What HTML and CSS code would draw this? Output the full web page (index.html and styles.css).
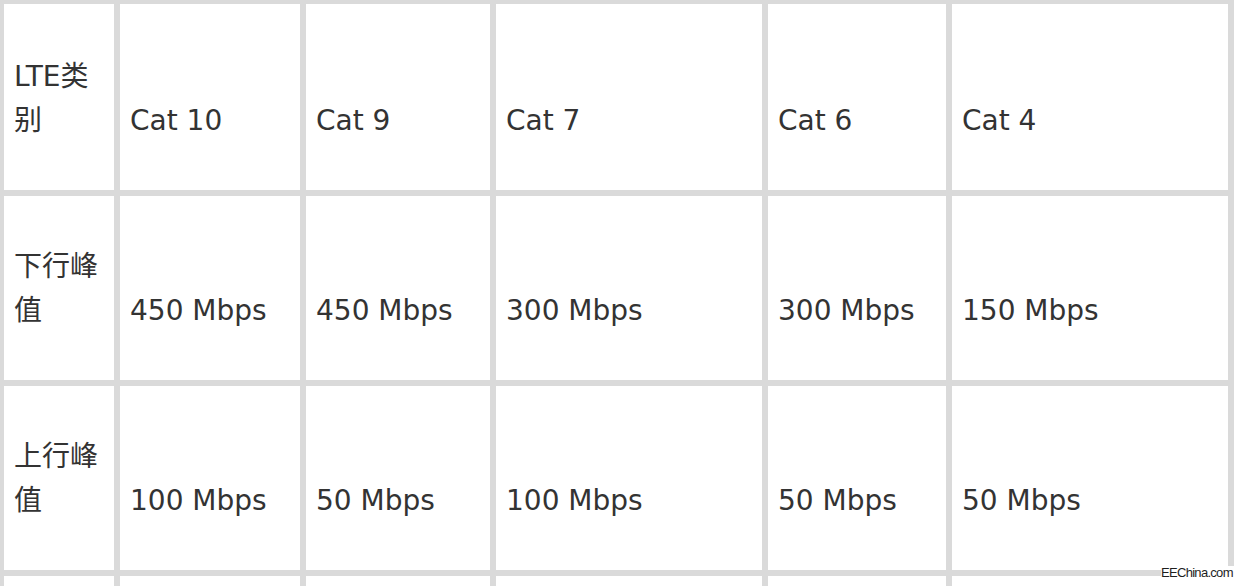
FILE: index.html
```html
<!DOCTYPE html>
<html lang="zh-CN">
<head>
<meta charset="utf-8">
<title>LTE类别</title>
<link rel="stylesheet" href="styles.css">
</head>
<body>
<div class="sheet">
  <div class="grid">
    <div class="cell">LTE类别</div>
    <div class="cell">Cat 10</div>
    <div class="cell">Cat 9</div>
    <div class="cell">Cat 7</div>
    <div class="cell">Cat 6</div>
    <div class="cell">Cat 4</div>

    <div class="cell">下行峰值</div>
    <div class="cell">450 Mbps</div>
    <div class="cell">450 Mbps</div>
    <div class="cell">300 Mbps</div>
    <div class="cell">300 Mbps</div>
    <div class="cell">150 Mbps</div>

    <div class="cell">上行峰值</div>
    <div class="cell">100 Mbps</div>
    <div class="cell">50 Mbps</div>
    <div class="cell">100 Mbps</div>
    <div class="cell">50 Mbps</div>
    <div class="cell">50 Mbps</div>

    <div class="cell"></div>
    <div class="cell"></div>
    <div class="cell"></div>
    <div class="cell"></div>
    <div class="cell"></div>
    <div class="cell"></div>
  </div>
  <div class="watermark">EEChina.com</div>
</div>
</body>
</html>
```

FILE: styles.css
```css
html, body {
  margin: 0;
  padding: 0;
  background: #ffffff;
}

body {
  width: 1240px;
  height: 586px;
  overflow: hidden;
}

.sheet {
  position: relative;
  width: 1240px;
  height: 586px;
  overflow: hidden;
}

.grid {
  display: grid;
  width: 1224px;
  grid-template-columns: 110px 180px 184px 266px 178px 276px;
  grid-template-rows: 186px 184px 184px 100px;
  gap: 6px;
  padding: 4px 6px 0 4px;
  background: #dadada;
}

.cell {
  background: #ffffff;
  display: flex;
  align-items: flex-end;
  padding: 0 9px 47px 10px;
  font-family: Verdana, "DejaVu Sans", "Noto Sans CJK SC", sans-serif;
  font-size: 28px;
  line-height: 44px;
  color: #333333;
  min-width: 0;
}

.watermark {
  position: absolute;
  left: 1161px;
  right: 0;
  top: 566px;
  bottom: 0;
  background: #ffffff;
  font-family: "Liberation Sans", Arial, sans-serif;
  font-size: 13px;
  line-height: 13px;
  letter-spacing: -0.7px;
  color: #1e1e1e;
  white-space: nowrap;
}
```
